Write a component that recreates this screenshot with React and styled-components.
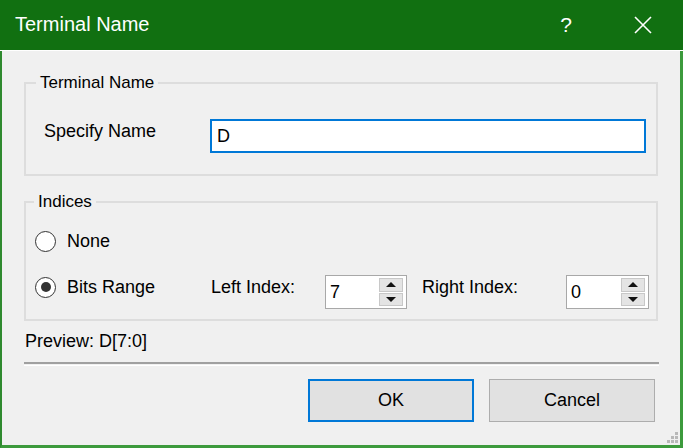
import React from 'react';
import styled, { createGlobalStyle } from 'styled-components';

const GlobalStyle = createGlobalStyle`
  html, body {
    margin: 0;
    padding: 0;
    background: #ffffff;
  }
  body {
    font-family: "Liberation Sans", Arial, sans-serif;
    color: #000;
  }
`;

const Window = styled.div`
  width: 683px;
  height: 448px;
  box-sizing: border-box;
  display: flex;
  flex-direction: column;
  border-left: 2px solid #2f8a2f;
  border-right: 3px solid #3c9a3c;
  border-bottom: 3px solid #3c9a3c;
  background: #f0f0f0;
`;

const TitleBar = styled.div`
  height: 50px;
  margin-left: -2px;
  margin-right: -3px;
  background: #117011;
  color: #fff;
  display: flex;
  align-items: center;
  padding-left: 15px;
  padding-right: 20px;
  border-bottom: 1px solid #ffffff;
  font-size: 20px;
`;

const TitleText = styled.div`
  flex: 1;
  padding-bottom: 1px;
`;

const TitleControls = styled.div`
  display: flex;
  gap: 37px;
`;

const TitleButton = styled.div`
  width: 40px;
  height: 50px;
  display: flex;
  align-items: center;
  justify-content: center;
  font-size: 21px;
`;

const Body = styled.div`
  position: relative;
  flex: 1;
  padding: 22px 22px 0 22px;
  display: flex;
  flex-direction: column;
`;

const Group = styled.fieldset`
  margin: 0 0 ${(p) => p.$mb || 0}px 0;
  padding: ${(p) => p.$pt}px 10px ${(p) => p.$pb}px 18px;
  border: 2px solid #dddddd;
  min-width: 0;
  display: flex;
  flex-direction: column;
  gap: 12px;
`;

const Legend = styled.legend`
  margin-left: ${(p) => p.$ml}px;
  padding: 0 4px;
  font-size: 17px;
  line-height: 20px;
`;

const Row = styled.div`
  height: 34px;
  display: flex;
  align-items: center;

  & > * {
    flex-shrink: 0;
  }
`;

const Label = styled.div`
  width: ${(p) => p.$w}px;
  font-size: 18px;
  padding-bottom: ${(p) => p.$pb || 0}px;
`;

const NameInput = styled.div`
  flex: 1;
  height: 34px;
  box-sizing: border-box;
  border: 2px solid #0078d7;
  background: #fff;
  display: flex;
  align-items: center;
  padding-left: 5px;
  font-size: 18px;
`;

const Radio = styled.div`
  width: 21px;
  height: 21px;
  box-sizing: border-box;
  border: 1.5px solid #333;
  border-radius: 50%;
  background: #fff;
  margin-left: -9px;
  margin-right: 11px;
  display: flex;
  align-items: center;
  justify-content: center;

  &::after {
    content: '';
    display: ${(p) => (p.$checked ? 'block' : 'none')};
    width: 10px;
    height: 10px;
    border-radius: 50%;
    background: #333;
  }
`;

const Spinner = styled.div`
  width: ${(p) => p.$w}px;
  height: 34px;
  box-sizing: border-box;
  margin-top: 10px;
  border: 1.5px solid #a8a8a8;
  background: #fff;
  display: flex;
  align-items: stretch;
  margin-right: ${(p) => p.$mr || 0}px;
`;

const SpinValue = styled.div`
  flex: 1;
  display: flex;
  align-items: center;
  padding-left: 4px;
  font-size: 18px;
`;

const SpinButtons = styled.div`
  width: 24px;
  margin: 2px 3px 2px 0;
  display: flex;
  flex-direction: column;
  gap: 1px;
  background: #fff;
`;

const SpinButton = styled.div`
  flex: 1;
  background: #e4e4e4;
  border: 1px solid #c8c8c8;
  display: flex;
  align-items: center;
  justify-content: center;

  &::after {
    content: '';
    width: 0;
    height: 0;
    border-left: 5px solid transparent;
    border-right: 5px solid transparent;
    ${(p) => (p.$up ? 'border-bottom: 5px solid #111;' : 'border-top: 5px solid #111;')}
  }
`;

const Preview = styled.div`
  height: 41px;
  display: flex;
  align-items: center;
  padding-left: 1px;
  font-size: 18px;
`;

const Separator = styled.div`
  height: 1px;
  margin-right: -1px;
  border-top: 2px solid #a0a0a0;
  border-bottom: 1px solid #ffffff;
`;

const ButtonBar = styled.div`
  display: flex;
  justify-content: flex-end;
  gap: 15px;
  padding-top: 13px;
  padding-right: 3px;
`;

const Button = styled.div`
  width: 166px;
  height: 43px;
  box-sizing: border-box;
  background: #e1e1e1;
  border: ${(p) => (p.$default ? '2px solid #0078d7' : '1.5px solid #adadad')};
  display: flex;
  align-items: center;
  justify-content: center;
  font-size: 18px;
`;

const Grip = styled.svg`
  position: absolute;
  right: 1px;
  bottom: 1px;
`;

function Spin({ value, width, mr }) {
  return (
    <Spinner $w={width} $mr={mr}>
      <SpinValue>{value}</SpinValue>
      <SpinButtons>
        <SpinButton $up />
        <SpinButton />
      </SpinButtons>
    </Spinner>
  );
}

export default function App() {
  return (
    <>
      <GlobalStyle />
      <Window>
        <TitleBar>
          <TitleText>Terminal Name</TitleText>
          <TitleControls>
            <TitleButton>?</TitleButton>
            <TitleButton>
              <svg width="18" height="18" viewBox="0 0 18 18">
                <path d="M1 1 L17 17 M17 1 L1 17" stroke="#fff" strokeWidth="1.6" />
              </svg>
            </TitleButton>
          </TitleControls>
        </TitleBar>
        <Body>
          <Group $pt={26} $pb={21} $mb={16}>
            <Legend $ml={-8}>Terminal Name</Legend>
            <Row>
              <Label $w={166} $pb={10}>Specify Name</Label>
              <NameInput>D</NameInput>
            </Row>
          </Group>
          <Group $pt={12} $pb={15}>
            <Legend $ml={-10}>Indices</Legend>
            <Row>
              <Radio />
              <Label $w={120}>None</Label>
            </Row>
            <Row>
              <Radio $checked />
              <Label $w={144}>Bits Range</Label>
              <Label $w={114}>Left Index:</Label>
              <Spin value="7" width={82} mr={15} />
              <Label $w={144}>Right Index:</Label>
              <Spin value="0" width={83} />
            </Row>
          </Group>
          <Preview>Preview: D[7:0]</Preview>
          <Separator />
          <ButtonBar>
            <Button $default>OK</Button>
            <Button>Cancel</Button>
          </ButtonBar>
          <Grip width="14" height="14" viewBox="0 0 14 14">
            <rect x="10" y="2" width="3" height="3" fill="#b8b8b8" />
            <rect x="6" y="6" width="3" height="3" fill="#b8b8b8" />
            <rect x="10" y="6" width="3" height="3" fill="#b8b8b8" />
            <rect x="2" y="10" width="3" height="3" fill="#b8b8b8" />
            <rect x="6" y="10" width="3" height="3" fill="#b8b8b8" />
            <rect x="10" y="10" width="3" height="3" fill="#b8b8b8" />
          </Grip>
        </Body>
      </Window>
    </>
  );
}
